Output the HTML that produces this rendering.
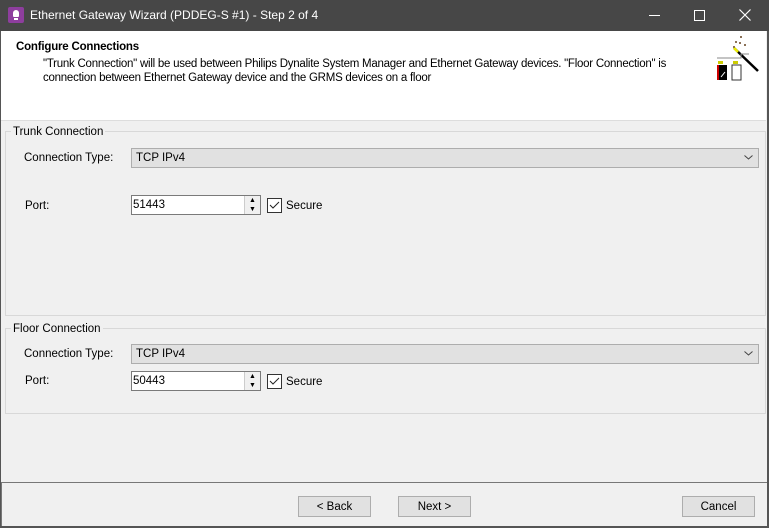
<!DOCTYPE html><html><head><style>
body{margin:0;width:769px;height:528px;overflow:hidden;font-family:"Liberation Sans",sans-serif;font-size:11.5px;background:#f0f0f0;position:relative;color:#000}
.a{position:absolute}
.tb{left:0;top:0;width:769px;height:31px;background:#474747;color:#fff;font-size:12px}
.combo{background:#e1e1e1;border:1px solid #adadad;height:20px;box-sizing:border-box;padding:3px 4px;width:628px;left:131px}
.inp{background:#fff;border:1px solid #7a7a7a;height:20px;box-sizing:border-box;padding:3px 1px;width:130px;left:131px}
.spin{left:244px;width:15px;height:18px;border-left:1px solid #ccc;background:#f0f0f0}
.cb{width:13px;height:13px;border:1px solid #333;background:#fff;left:267px}
.grp{border:1px solid #d8d8d8;left:5px;width:759px}
.btn{width:73px;height:21px;border:1px solid #adadad;background:#e1e1e1;box-sizing:border-box;text-align:center;line-height:21px}
</style></head><body>
<div class="a tb">
<div class="a" style="left:8px;top:7px;width:16px;height:16px;background:#8e3e9e;border-radius:2px"><div class="a" style="left:5px;top:3px;width:6px;height:7px;background:#fff;border-radius:3px 3px 1px 1px"></div><div class="a" style="left:6px;top:11px;width:4px;height:2px;background:#fff"></div></div>
<div class="a" style="left:30px;top:8px">Ethernet Gateway Wizard (PDDEG-S #1) - Step 2 of 4</div>
<div class="a" style="left:649px;top:15px;width:11px;height:1px;background:#fff"></div>
<div class="a" style="left:694px;top:10px;width:9px;height:9px;border:1px solid #fff"></div>
<svg class="a" style="left:739px;top:9px" width="12" height="12"><path d="M0.5 0.5L11.5 11.5M11.5 0.5L0.5 11.5" stroke="#fff" stroke-width="1.2"/></svg>
</div>
<div class="a" style="left:0;top:31px;width:1px;height:497px;background:#555"></div>
<div class="a" style="left:767px;top:31px;width:2px;height:497px;background:#555"></div>
<div class="a" style="left:1px;top:31px;width:765px;height:89px;background:#fff;border-bottom:1px solid #ddd"></div>
<div class="a" style="left:16px;top:41px;font-weight:bold;letter-spacing:-0.2px">Configure Connections</div>
<div class="a" style="left:43px;top:57px;width:640px;line-height:14px;letter-spacing:-0.25px">"Trunk Connection" will be used between Philips Dynalite System Manager and Ethernet Gateway devices. "Floor Connection" is connection between Ethernet Gateway device and the GRMS devices on a floor</div>
<svg class="a" style="left:713px;top:34px" width="46" height="52"><g fill="#642"><circle cx="23" cy="8" r="1"/><circle cx="28" cy="3" r="1"/><circle cx="27" cy="9" r="1"/><circle cx="32" cy="11" r="1"/><circle cx="21" cy="13" r="1"/></g><line x1="21" y1="14" x2="45" y2="37" stroke="#000" stroke-width="2.5"/><line x1="21" y1="14" x2="25" y2="18" stroke="#ee0" stroke-width="2.5"/><path d="M4 24h24v-4h8" stroke="#888" fill="none"/><rect x="5" y="27" width="5" height="3" fill="#cc0"/><rect x="20" y="27" width="5" height="3" fill="#cc0"/><rect x="4" y="31" width="10" height="15" fill="#000"/><rect x="4" y="31" width="2" height="15" fill="#c00"/><rect x="19" y="31" width="9" height="15" fill="#fff" stroke="#333"/><path d="M8 43l4-5" stroke="#fff"/></svg>
<div class="a grp" style="top:131px;height:183px"></div>
<div class="a" style="left:11px;top:126px;background:#f0f0f0;padding:0 2px">Trunk Connection</div>
<div class="a" style="left:24px;top:152px">Connection Type:</div>
<div class="a combo" style="top:148px">TCP IPv4<svg class="a" style="right:5px;top:6px" width="9" height="5"><path d="M0.5 0.5L4.5 4L8.5 0.5" stroke="#444" fill="none"/></svg></div>
<div class="a" style="left:25px;top:200px">Port:</div>
<div class="a inp" style="top:195px">51443</div>
<div class="a spin" style="top:196px;font-size:7px;line-height:9px;text-align:center">▲<br>▼</div>
<div class="a cb" style="top:198px"><svg class="a" style="left:1px;top:2px" width="11" height="9"><path d="M1 4L4 7L10 1" stroke="#222" fill="none"/></svg></div>
<div class="a" style="left:286px;top:200px">Secure</div>
<div class="a grp" style="top:328px;height:84px"></div>
<div class="a" style="left:11px;top:323px;background:#f0f0f0;padding:0 2px">Floor Connection</div>
<div class="a" style="left:24px;top:348px">Connection Type:</div>
<div class="a combo" style="top:344px">TCP IPv4<svg class="a" style="right:5px;top:6px" width="9" height="5"><path d="M0.5 0.5L4.5 4L8.5 0.5" stroke="#444" fill="none"/></svg></div>
<div class="a" style="left:25px;top:375px">Port:</div>
<div class="a inp" style="top:371px">50443</div>
<div class="a spin" style="top:372px;font-size:7px;line-height:9px;text-align:center">▲<br>▼</div>
<div class="a cb" style="top:374px"><svg class="a" style="left:1px;top:2px" width="11" height="9"><path d="M1 4L4 7L10 1" stroke="#222" fill="none"/></svg></div>
<div class="a" style="left:286px;top:376px">Secure</div>
<div class="a" style="left:1px;top:482px;width:766px;height:44px;border-top:1px solid #777;border-left:1px solid #777;box-sizing:border-box"></div>
<div class="a" style="left:0;top:526px;width:769px;height:2px;background:#555"></div>
<div class="a btn" style="left:298px;top:496px">&lt; Back</div>
<div class="a btn" style="left:398px;top:496px">Next &gt;</div>
<div class="a btn" style="left:682px;top:496px">Cancel</div>
</body></html>
